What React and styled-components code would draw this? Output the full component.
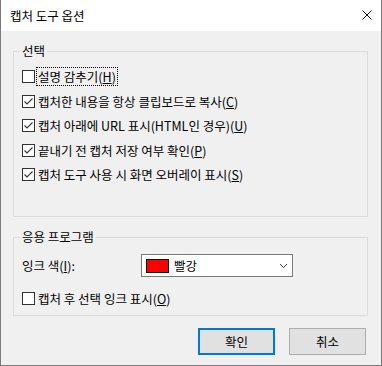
import React from "react";
import styled, { createGlobalStyle } from "styled-components";

const GlobalStyle = createGlobalStyle`
  html, body { margin: 0; padding: 0; background: #f0f0f0; }
  body {
    font-family: "Noto Sans CJK KR", "Noto Sans", "Liberation Sans", sans-serif;
    font-size: 12.5px;
    color: #000;
  }
  * { box-sizing: border-box; }
`;

const Window = styled.div`
  width: 382px;
  height: 366px;
  border: 1px solid #7a7a7a;
  border-top: none;
  background: #f0f0f0;
  display: flex;
  flex-direction: column;
`;

const TitleBar = styled.div`
  height: 31px;
  background: #fff;
  display: flex;
  align-items: center;
  justify-content: space-between;
  padding: 0 9px 0 9px;
  line-height: 16px;
`;

const CloseButton = styled.div`
  width: 10px;
  height: 10px;
  display: flex;
  margin-top: -1px;
`;

const Body = styled.div`
  flex: 1;
  padding: 12px 13px 0 12px;
  display: flex;
  flex-direction: column;
  gap: 12px;
`;

const Group = styled.fieldset`
  margin: 0;
  border: 1px solid #dcdcdc;
  padding: ${(p) => p.$pad};
  min-width: 0;
`;

const Legend = styled.legend`
  line-height: 16px;
  padding: 0 2px;
  margin-left: -2px;
`;

const CheckList = styled.div`
  display: flex;
  flex-direction: column;
  gap: 7.5px;
`;

const CheckRow = styled.label`
  display: flex;
  align-items: center;
  height: 17px;
  margin-top: ${(p) => p.$mt || 0}px;
`;

const Box = styled.span`
  width: 13px;
  height: 13px;
  border: 1px solid #333;
  background: #fff;
  display: flex;
  flex: none;
`;

const Label = styled.span`
  margin-left: 2px;
  padding: 0 1px;
  line-height: 15px;
  height: 17px;
  display: flex;
  align-items: center;
  white-space: nowrap;
  outline: ${(p) => (p.$focused ? "1px dotted #000" : "none")};
`;

const InkRow = styled.div`
  display: flex;
  align-items: center;
  height: 23px;
`;

const InkLabel = styled.span`
  width: 119px;
  white-space: nowrap;
`;

const Combo = styled.div`
  width: 152px;
  height: 23px;
  border: 1px solid #7a7a7a;
  background: #fff;
  display: flex;
  align-items: center;
  padding: 0 4px 0 4px;
`;

const Swatch = styled.span`
  width: 23px;
  height: 14px;
  border: 1px solid #000;
  background: ${(p) => p.$color};
  flex: none;
`;

const ComboText = styled.span`
  margin-left: 5px;
  flex: 1;
`;

const ButtonRow = styled.div`
  display: flex;
  justify-content: flex-end;
  gap: 14px;
  padding-right: 2px;
`;

const Button = styled.div`
  width: 77px;
  height: 27px;
  background: #e1e1e1;
  border: ${(p) => (p.$primary ? "2px solid #0078d7" : "1px solid #adadad")};
  display: flex;
  align-items: center;
  justify-content: center;
`;

const Check = ({ checked }) => (
  <Box>
    {checked && (
      <svg width="11" height="11" viewBox="0 0 11 11">
        <polyline points="1.5,5.5 4,8 9.5,2.5" fill="none" stroke="#333" strokeWidth="1.1" />
      </svg>
    )}
  </Box>
);

const Option = ({ checked, text, mn, focused, mt }) => (
  <CheckRow $mt={mt}>
    <Check checked={checked} />
    <Label $focused={focused}>
      {text}(<u>{mn}</u>)
    </Label>
  </CheckRow>
);

export default function App() {
  return (
    <>
      <GlobalStyle />
      <Window>
        <TitleBar>
          <span>캡처 도구 옵션</span>
          <CloseButton>
            <svg width="10" height="10" viewBox="0 0 10 10">
              <path d="M0.5 0.5 L9.5 9.5 M9.5 0.5 L0.5 9.5" stroke="#111" strokeWidth="1" fill="none" />
            </svg>
          </CloseButton>
        </TitleBar>
        <Body>
          <Group $pad="9px 8px 33px 8px">
            <Legend>선택</Legend>
            <CheckList>
              <Option text="설명 감추기" mn="H" focused />
              <Option checked text="캡처한 내용을 항상 클립보드로 복사" mn="C" />
              <Option checked text="캡처 아래에 URL 표시(HTML인 경우)" mn="U" />
              <Option checked text="끝내기 전 캡처 저장 여부 확인" mn="P" />
              <Option checked text="캡처 도구 사용 시 화면 오버레이 표시" mn="S" />
            </CheckList>
          </Group>
          <Group $pad="9px 8px 8px 8px">
            <Legend>응용 프로그램</Legend>
            <InkRow>
              <InkLabel>
                잉크 색(<u>I</u>):
              </InkLabel>
              <Combo>
                <Swatch $color="#ff0000" />
                <ComboText>빨강</ComboText>
                <svg width="9" height="6" viewBox="0 0 9 6">
                  <polyline points="1,1 4.5,4.5 8,1" fill="none" stroke="#444" strokeWidth="1" />
                </svg>
              </Combo>
            </InkRow>
            <Option text="캡처 후 선택 잉크 표시" mn="O" mt={13} />
          </Group>
          <ButtonRow>
            <Button $primary>확인</Button>
            <Button>취소</Button>
          </ButtonRow>
        </Body>
      </Window>
    </>
  );
}
